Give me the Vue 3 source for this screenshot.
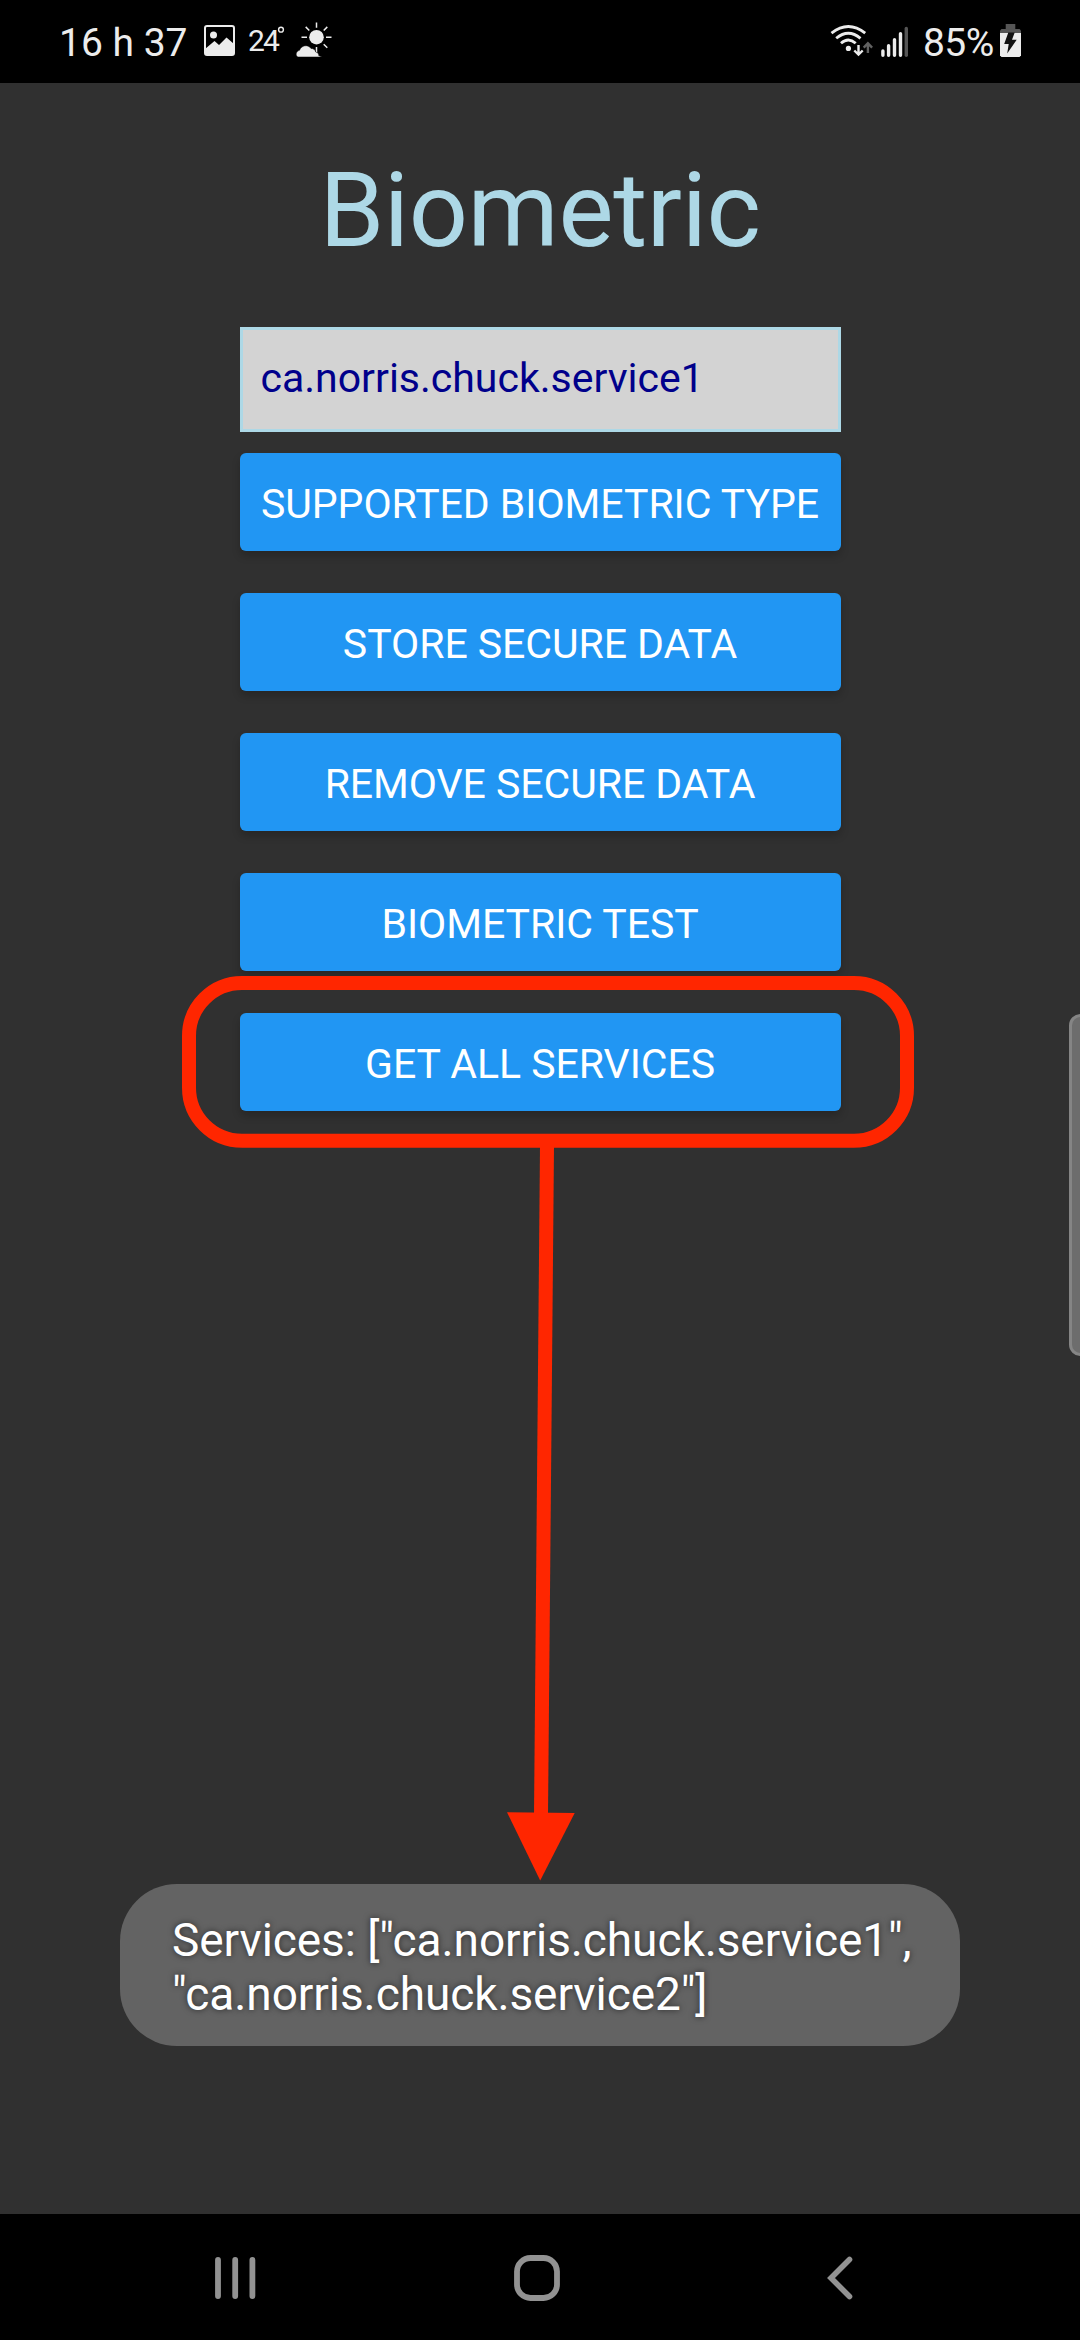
<script setup>
import { ref } from 'vue'

const service = ref('ca.norris.chuck.service1')
const actions = [
  'Supported biometric type',
  'Store secure data',
  'Remove secure data',
  'Biometric test',
  'Get all services',
]
const toast = ['Services: ["ca.norris.chuck.service1",', '"ca.norris.chuck.service2"]']
</script>

<template>
  <div class="phone">
    <header class="status">
      <div class="status-side">
        <span class="clock">16 h 37</span>
        <svg class="picture" width="31" height="31" viewBox="0 0 31 31">
          <rect x="1" y="1" width="29" height="29" rx="2" fill="none" stroke="#ececec" stroke-width="2" />
          <circle cx="9.5" cy="10" r="3.5" fill="#ececec" />
          <path d="M1 24L10.500 16L15 20L22.500 12.500L30 19V29H1Z" fill="#ececec" />
        </svg>
        <span class="temp">24</span>
        <svg class="weather" width="56" height="40" viewBox="276 20 56 40">
          <circle cx="281" cy="29.700" r="2.400" fill="none" stroke="#ececec" stroke-width="1.400" />
          <circle cx="316.500" cy="37.200" r="7.300" fill="#ececec" />
          <path d="M316.500 22.500V27.700M316.500 47V52.500M301.500 37.300H307M326 37.300H331.500M305.700 26.900L309.300 30.500M327.300 26.900L323.700 30.500M323.700 44.200L327.300 47.800" stroke="#ececec" stroke-width="1.500" />
          <path d="M298 57C295.500 56.500 295.300 51.500 299.500 50.300C301 45.500 308 43.800 311 48.500C313.500 48.300 315.300 50 315.700 52C318 52.500 319 54 318.700 55.500L322 57Z" fill="#ececec" stroke="#000" stroke-width=".5" />
        </svg>
      </div>
      <div class="status-side">
        <svg class="wifi" width="44" height="36" viewBox="830 22 44 36">
          <g fill="none" stroke="#ececec" stroke-width="2.800">
            <path d="M831.500 33.200Q848.300 19.800 865.200 33.200" />
            <path d="M836.200 38.300Q848.300 28.200 860.500 38.300" />
            <path d="M841 43.300Q848.300 36.700 855.700 43.300" />
          </g>
          <circle cx="848.400" cy="48.400" r="2.600" fill="#ececec" />
          <path d="M858.500 45V54M854.300 50.500L858.500 54.500L862.700 50.500" fill="none" stroke="#ececec" stroke-width="2.400" />
          <path d="M867.900 53V44M863.700 47.700L867.900 43.300L872.100 47.700" fill="none" stroke="#616161" stroke-width="2.400" />
        </svg>
        <svg class="signal" width="28" height="32" viewBox="881 26 28 32">
          <g stroke="#ececec" stroke-width="3.400" stroke-linecap="round">
            <path d="M882.900 51V55.200M888.600 45.700V55.200M894.500 39.700V55.200M900.500 33.700V55.200" />
            <path d="M906.300 28.500V55.200" stroke="#555" />
          </g>
        </svg>
        <span class="percent">85%</span>
        <svg class="battery" width="21" height="33" viewBox="0 0 21 33">
          <path d="M5.700 0H15.300V5H5.700Z" fill="#555" />
          <path d="M1.500 5H19.500L21 6.500V9H0V6.500Z" fill="#555" />
          <path d="M0 9H21V31.500L19.500 33H1.500L0 31.500Z" fill="#ececec" />
          <path d="M8.300 8.500H14.700L12 15.700H16.700L7.200 29.500L8.700 20H4.200Z" fill="#111" />
        </svg>
      </div>
    </header>

    <main class="screen">
      <h1 class="title">Biometric</h1>
      <div class="form">
        <input v-model="service" class="field" type="text" spellcheck="false" />
        <button v-for="label in actions" :key="label" class="action">{{ label }}</button>
      </div>
      <div class="toast">
        <div v-for="line in toast" :key="line">{{ line }}</div>
      </div>
    </main>

    <nav class="navbar">
      <svg width="42" height="46" viewBox="0 0 42 46">
        <path d="M4 5V41M21.200 5V41M38.400 5V41" stroke="#929292" stroke-width="5.800" stroke-linecap="round" />
      </svg>
      <svg class="home" width="46" height="46" viewBox="0 0 46 46">
        <rect x="3" y="3" width="40" height="40" rx="13.500" fill="none" stroke="#929292" stroke-width="5.800" />
      </svg>
      <svg class="back" width="26" height="46" viewBox="0 0 26 46">
        <path d="M22.500 4.500L4 23L22.500 41.500" fill="none" stroke="#929292" stroke-width="5.600" stroke-linecap="round" />
      </svg>
    </nav>

    <div class="edge-handle"></div>
    <svg class="annotation" width="740" height="910" viewBox="180 972 740 910">
      <rect x="189" y="983" width="718" height="157.700" rx="53" fill="none" stroke="#ff2600" stroke-width="14" />
      <path d="M547 1146L541 1815" stroke="#ff2600" stroke-width="14" />
      <path d="M507 1812.300L574.700 1813L540.200 1880.500Z" fill="#ff2600" />
    </svg>
  </div>
</template>

<style>
body {
  margin: 0;
  background: #303030;
}
</style>

<style scoped>
.phone {
  position: relative;
  display: flex;
  flex-direction: column;
  width: 1080px;
  height: 2340px;
  overflow: hidden;
  background: #303030;
  font-family: Roboto, sans-serif;
}
.status {
  display: flex;
  justify-content: space-between;
  height: 83px;
  padding: 0 59px;
  background: #000;
  color: #ececec;
}
.status-side {
  display: flex;
  align-items: flex-start;
}
.clock,
.percent {
  margin-top: 19px;
  font-size: 39px;
  line-height: 48px;
  white-space: nowrap;
}
.clock { width: 145px; }
.picture { margin-top: 25px; }
.temp {
  box-sizing: border-box;
  width: 41px;
  margin-top: 23px;
  padding-left: 13px;
  font-size: 30px;
  line-height: 36px;
  letter-spacing: -1.8px;
}
.weather { margin-top: 20px; }
.wifi { margin-top: 22px; }
.signal { margin: 26px 14px 0 7px; }
.percent {
  width: 77px;
  letter-spacing: -0.6px;
}
.battery { margin-top: 24px; }
.screen {
  display: flex;
  flex: 1;
  flex-direction: column;
  align-items: center;
}
.title {
  margin: 66px 0 0;
  color: #add8e6;
  font-size: 104px;
  font-weight: 400;
  line-height: 124px;
  letter-spacing: -0.4px;
}
.form {
  display: flex;
  flex-direction: column;
  width: 601px;
  margin-top: 54px;
}
.field {
  box-sizing: border-box;
  height: 105px;
  margin: 0 0 21px;
  padding: 0 18px 4px;
  border: 3px solid #add8e6;
  border-radius: 0;
  outline: 0;
  background: #d3d3d3;
  color: #00008b;
  font: 41px Roboto, sans-serif;
}
.action {
  height: 98px;
  margin: 0 0 42px;
  padding: 4px 0 0;
  border: 0;
  border-radius: 6px;
  background: #2196f3;
  box-shadow: 0 5px 8px rgba(0, 0, 0, 0.2);
  color: #fff;
  font: 41px Roboto, sans-serif;
  letter-spacing: -0.05px;
  text-transform: uppercase;
  white-space: nowrap;
}
.toast {
  box-sizing: border-box;
  width: 840px;
  height: 162px;
  margin: auto 0 168px;
  padding: 29px 52px 0;
  border-radius: 57px;
  background: #636363;
  color: #fff;
  font-size: 46px;
  line-height: 54px;
  letter-spacing: -0.08px;
  text-shadow: 0 0 6px rgba(0, 0, 0, 0.6);
  white-space: nowrap;
}
.navbar {
  display: flex;
  box-sizing: border-box;
  height: 126px;
  padding: 41px 0 0 214px;
  background: #000;
}
.home { margin-left: 258px; }
.back { margin-left: 267px; }
.edge-handle {
  position: absolute;
  top: 1014px;
  right: -12px;
  box-sizing: border-box;
  width: 23px;
  height: 342px;
  border: 3px solid #858585;
  border-radius: 12px;
  background: #6d6d6d;
}
.annotation {
  position: absolute;
  top: 972px;
  left: 180px;
  pointer-events: none;
}
</style>
